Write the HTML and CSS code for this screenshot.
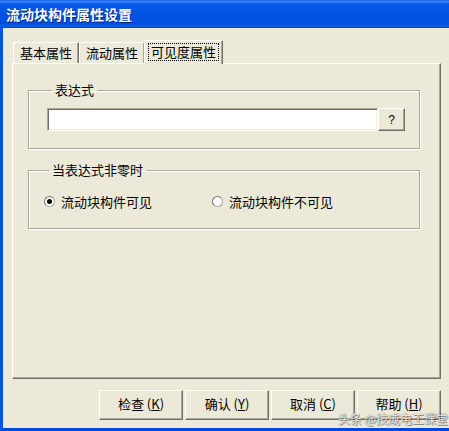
FILE: index.html
```html
<!DOCTYPE html>
<html lang="zh-CN">
<head>
    <meta charset="UTF-8">
    <title>流动块构件属性设置</title>
    <link rel="stylesheet" href="styles.css">
</head>
<body>
    <div class="window">
        <div class="titlebar">流动块构件属性设置</div>

        <div class="client">
            <div class="tabs">
                <div class="tab first">基本属性</div>
                <div class="tab">流动属性</div>
                <div class="tab active"><span class="focus">可见度属性</span></div>
            </div>

            <div class="panel">
                <fieldset class="group group-expr">
                    <legend>表达式</legend>
                    <div class="expr-row">
                        <div class="input"></div>
                        <div class="btn small">?</div>
                    </div>
                </fieldset>

                <fieldset class="group group-radio">
                    <legend>当表达式非零时</legend>
                    <div class="radio-row">
                        <label class="radio checked"><span class="dot"></span>流动块构件可见</label>
                        <label class="radio"><span class="dot"></span>流动块构件不可见</label>
                    </div>
                </fieldset>
            </div>

            <div class="buttons">
                <div class="btn">检查 (<u>K</u>)</div>
                <div class="btn">确认 (<u>Y</u>)</div>
                <div class="btn">取消 (<u>C</u>)</div>
                <div class="btn">帮助 (<u>H</u>)</div>
            </div>

            <div class="watermark">头条 @技成电工课堂</div>
        </div>
    </div>
</body>
</html>
```

FILE: styles.css
```css
body {
    margin: 0;
    padding: 0;
    font-family: "Noto Sans CJK SC", "DejaVu Sans", sans-serif;
    font-size: 13px;
    color: #000;
    background: #ECE9D8;
}

.window {
    width: 449px;
    height: 431px;
    display: flex;
    flex-direction: column;
    overflow: hidden;
}

.titlebar {
    height: 28px;
    line-height: 28px;
    padding-left: 6px;
    color: #fff;
    font-weight: bold;
    font-size: 14px;
    text-shadow: 1px 1px 0 #0a1f80;
    background: linear-gradient(to bottom, #0a5ce8 0%, #3b86f6 6%, #0659e6 14%, #0052e2 50%, #0150de 85%, #0a5ee9 93%, #0040c8 100%);
    flex: none;
}

.client {
    position: relative;
    flex: 1;
    border-left: 3px solid #0055E5;
    border-bottom: 3px solid #0048D8;
    background: #ECE9D8;
    padding: 12px 8px 0 9px;
}

/* onglets */
.tabs {
    display: flex;
    align-items: flex-end;
    height: 23px;
    padding-left: 1px;
    position: relative;
    z-index: 2;
}

.tab {
    height: 20px;
    line-height: 20px;
    padding: 0 6px;
    border-top: 1px solid #fff;
    border-left: 1px solid #fff;
    border-right: 1px solid #716F64;
    box-shadow: inset -1px 0 0 #ACA899;
    background: #ECE9D8;
}

.tab.active {
    height: 23px;
    line-height: 22px;
    padding: 0 3px;
    margin-left: -1px;
    margin-bottom: -1px;
}

.tab .focus {
    border: 1px dotted #000;
    padding: 0 2px;
    line-height: 16px;
    display: inline-block;
}

.panel {
    height: 314px;
    border-top: 1px solid #fff;
    border-left: 1px solid #fff;
    border-right: 1px solid #716F64;
    border-bottom: 1px solid #716F64;
    box-shadow: inset -1px -1px 0 #ACA899;
    padding: 0 20px 0 15px;
}

/* cadres */
.group {
    margin: 0;
    border: 1px solid #ACA899;
    box-shadow: inset 1px 1px 0 #fff, 1px 1px 0 #fff;
    padding: 0 0 0 18px;
}

.group legend {
    padding: 0 3px;
    margin-left: 5px;
    line-height: 14px;
}

.group-expr {
    margin-top: 19px;
    padding-top: 11px;
    box-sizing: border-box;
    height: 66px;
}

.expr-row {
    display: flex;
}

.input {
    width: 327px;
    height: 19px;
    background: #fff;
    border-top: 1px solid #ACA899;
    border-left: 1px solid #ACA899;
    border-right: 1px solid #fff;
    border-bottom: 1px solid #fff;
    box-shadow: inset 1px 1px 0 #716F64, inset -1px -1px 0 #F1EFE2;
    padding: 1px;
}

.btn {
    box-sizing: border-box;
    width: 84px;
    height: 30px;
    display: flex;
    align-items: center;
    justify-content: center;
    line-height: 12px;
    background: #ECE9D8;
    border-top: 1px solid #fff;
    border-left: 1px solid #fff;
    border-right: 1px solid #716F64;
    border-bottom: 1px solid #716F64;
    box-shadow: inset -1px -1px 0 #ACA899;
    font-size: 13px;
    white-space: pre;
    padding-bottom: 2px;
}

.btn u {
    text-decoration: underline;
}

.btn.small {
    width: 27px;
    height: 23px;
    font-size: 12px;
    padding-bottom: 0;
    font-family: "Liberation Sans", sans-serif;
}

.group-radio {
    margin-top: 14px;
    height: 66px;
    box-sizing: border-box;
    padding: 15px 0 0 15px;
}

.radio-row {
    display: flex;
}

.radio {
    display: flex;
    align-items: center;
    width: 168px;
}

.radio .dot {
    box-sizing: border-box;
    width: 11px;
    height: 11px;
    border-radius: 50%;
    background: #fff;
    border: 1px solid #ACA899;
    border-top-color: #716F64;
    border-left-color: #716F64;
    margin-right: 6px;
    position: relative;
}

.radio.checked .dot::after {
    content: "";
    position: absolute;
    left: 2px;
    top: 2px;
    width: 5px;
    height: 5px;
    border-radius: 50%;
    background: #000;
}

.buttons {
    display: flex;
    justify-content: flex-end;
    gap: 2px;
    margin-top: 11px;
}

.watermark {
    position: absolute;
    right: 1px;
    bottom: 3px;
    font-size: 12px;
    line-height: 12px;
    color: rgba(255, 255, 255, 0.85);
    text-shadow: 0 0 1px #555, 1px 1px 0 rgba(0, 0, 0, 0.4);
}
```
